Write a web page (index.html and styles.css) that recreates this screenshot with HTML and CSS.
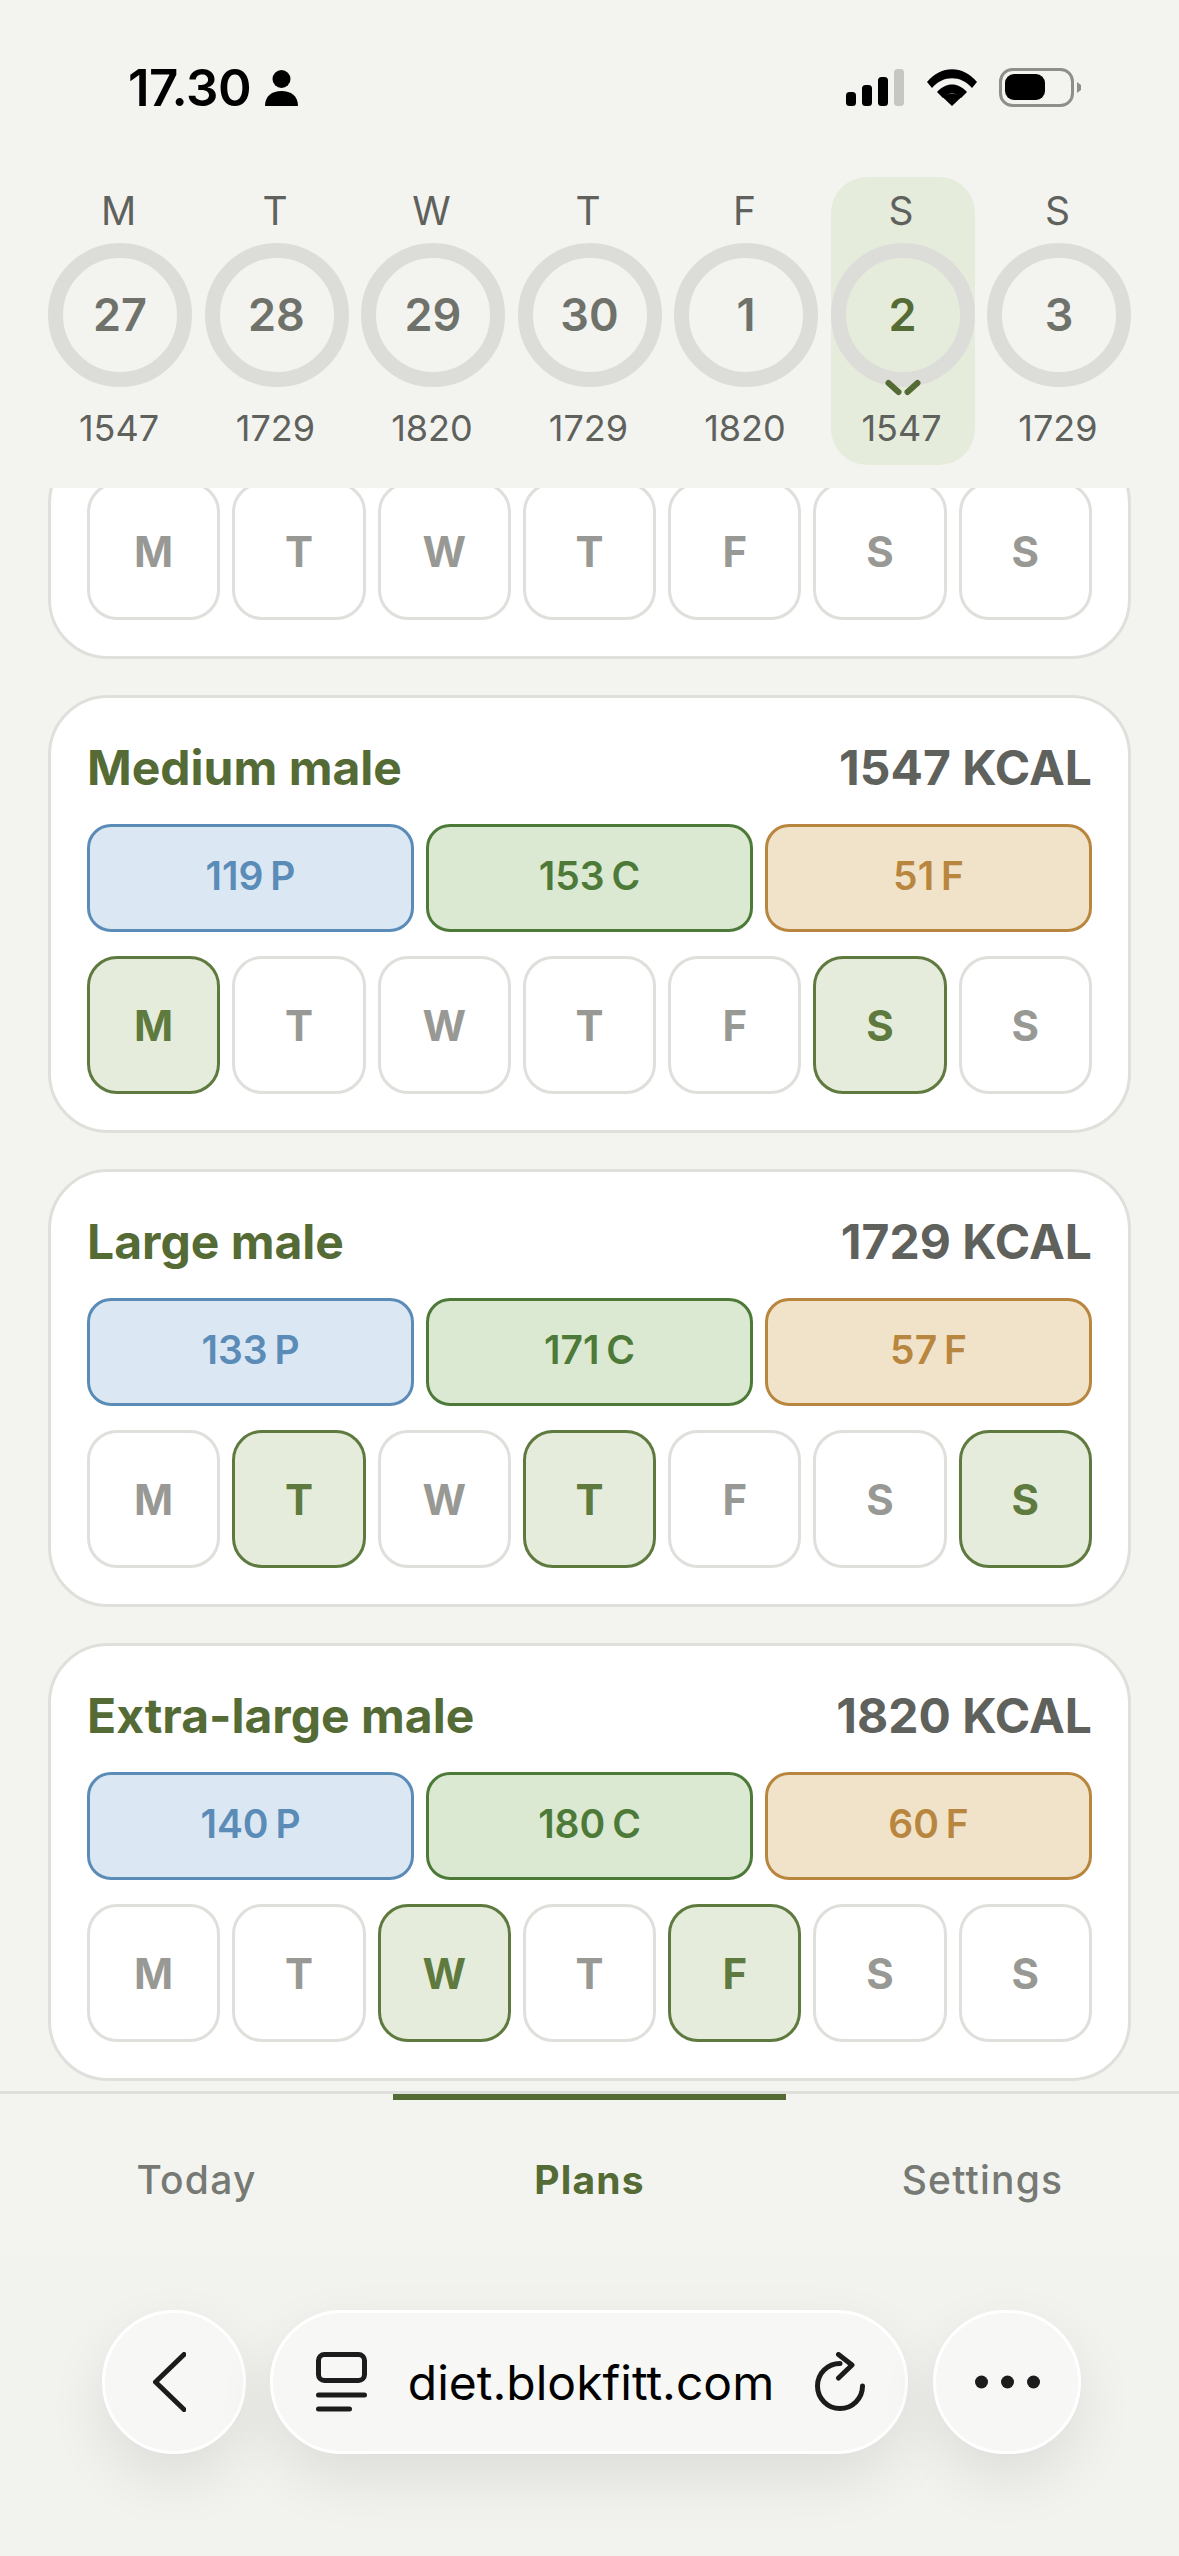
FILE: index.html
```html
<!DOCTYPE html>
<html lang="en">
<head>
    <meta charset="UTF-8">
    <meta name="viewport" content="width=device-width, initial-scale=1.0">
    <title>Plans</title>
    <link rel="stylesheet" href="styles.css">
</head>
<body>
    <div class="status-bar">
        <div class="status-left">
            <span class="status-time">17.30</span>
            <svg class="status-person" width="33" height="36" viewBox="0 0 33 36">
                <circle cx="16.5" cy="9" r="9"/>
                <path d="M0 36C0 26 7 21 16.5 21S33 26 33 36Z"/>
            </svg>
        </div>
        <svg class="status-icons" width="237" height="39" viewBox="846 68 237 39">
            <rect x="846" y="92" width="10" height="14" rx="3.5"/>
            <rect x="862" y="85" width="10" height="21" rx="3.5"/>
            <rect x="878" y="77" width="10" height="29" rx="3.5"/>
            <rect x="894" y="69" width="10" height="37" rx="3.5" fill="#c6c7c3"/>
            <path d="M927 82C941 65 963 65 977 82L972 88C961 75 943 75 932 88Z"/>
            <path d="M937 92C946 82 958 82 967 92L961 98C955 92 949 92 943 98Z"/>
            <path d="M952 106L942.5 97C948 92.5 956 92.5 961.5 97Z"/>
            <rect x="1000.5" y="69.5" width="72" height="36" rx="12" fill="none" stroke="#8e8e8b" stroke-width="3"/>
            <rect x="1005" y="74" width="40" height="26" rx="9"/>
            <path d="M1077 82L1081 85V90L1077 93Z" fill="#8e8e8b"/>
        </svg>
    </div>

    <div class="week">
        <div class="week-day">
            <span class="week-letter">M</span>
            <span class="week-ring"><span class="week-num">27</span></span>
            <span class="week-kcal">1547</span>
        </div>
        <div class="week-day">
            <span class="week-letter">T</span>
            <span class="week-ring"><span class="week-num">28</span></span>
            <span class="week-kcal">1729</span>
        </div>
        <div class="week-day">
            <span class="week-letter">W</span>
            <span class="week-ring"><span class="week-num">29</span></span>
            <span class="week-kcal">1820</span>
        </div>
        <div class="week-day">
            <span class="week-letter">T</span>
            <span class="week-ring"><span class="week-num">30</span></span>
            <span class="week-kcal">1729</span>
        </div>
        <div class="week-day">
            <span class="week-letter">F</span>
            <span class="week-ring"><span class="week-num">1</span></span>
            <span class="week-kcal">1820</span>
        </div>
        <div class="week-day selected">
            <span class="week-letter">S</span>
            <span class="week-ring"><span class="week-num">2</span></span>
            <svg class="week-chevron" width="36" height="18" viewBox="0 0 36 18">
                <path d="M3.5 4L13.5 13M32.5 4L22.5 13"/>
            </svg>
            <span class="week-kcal">1547</span>
        </div>
        <div class="week-day">
            <span class="week-letter">S</span>
            <span class="week-ring"><span class="week-num">3</span></span>
            <span class="week-kcal">1729</span>
        </div>
    </div>

    <div class="plans">
        <div class="plan">
            <div class="days">
                <div class="day">M</div>
                <div class="day">T</div>
                <div class="day">W</div>
                <div class="day">T</div>
                <div class="day">F</div>
                <div class="day">S</div>
                <div class="day">S</div>
            </div>
        </div>

        <div class="plan">
            <div class="plan-head">
                <span class="plan-name">Medium male</span>
                <span class="plan-kcal">1547 KCAL</span>
            </div>
            <div class="macros">
                <div class="macro protein">119 P</div>
                <div class="macro carbs">153 C</div>
                <div class="macro fat">51 F</div>
            </div>
            <div class="days">
                <div class="day on">M</div>
                <div class="day">T</div>
                <div class="day">W</div>
                <div class="day">T</div>
                <div class="day">F</div>
                <div class="day on">S</div>
                <div class="day">S</div>
            </div>
        </div>

        <div class="plan">
            <div class="plan-head">
                <span class="plan-name">Large male</span>
                <span class="plan-kcal">1729 KCAL</span>
            </div>
            <div class="macros">
                <div class="macro protein">133 P</div>
                <div class="macro carbs">171 C</div>
                <div class="macro fat">57 F</div>
            </div>
            <div class="days">
                <div class="day">M</div>
                <div class="day on">T</div>
                <div class="day">W</div>
                <div class="day on">T</div>
                <div class="day">F</div>
                <div class="day">S</div>
                <div class="day on">S</div>
            </div>
        </div>

        <div class="plan">
            <div class="plan-head">
                <span class="plan-name">Extra-large male</span>
                <span class="plan-kcal">1820 KCAL</span>
            </div>
            <div class="macros">
                <div class="macro protein">140 P</div>
                <div class="macro carbs">180 C</div>
                <div class="macro fat">60 F</div>
            </div>
            <div class="days">
                <div class="day">M</div>
                <div class="day">T</div>
                <div class="day on">W</div>
                <div class="day">T</div>
                <div class="day on">F</div>
                <div class="day">S</div>
                <div class="day">S</div>
            </div>
        </div>
    </div>

    <div class="tabs">
        <div class="tab">Today</div>
        <div class="tab active">Plans</div>
        <div class="tab">Settings</div>
    </div>

    <div class="browser-bar">
        <div class="pill pill-round">
            <svg width="33" height="60" viewBox="0 0 33 60">
                <path d="M31 2.5L2.5 30L31 57.5"/>
            </svg>
        </div>
        <div class="pill pill-url">
            <svg width="51" height="60" viewBox="0 0 51 60">
                <rect x="2.5" y="2.5" width="46" height="26" rx="6"/>
                <path d="M2.5 43H48.500M2.5 57H33.5"/>
            </svg>
            <span class="url-text">diet.blokfitt.com</span>
            <svg width="50" height="60" viewBox="0 0 50 60">
                <path d="M47.5 34A22.5 22.5 0 1 1 25 11.5"/>
                <path d="M23.5 2.5L37 13L23.5 26"/>
            </svg>
        </div>
        <div class="pill pill-more">
            <svg width="65" height="14" viewBox="0 0 65 14">
                <circle cx="6.5" cy="7" r="6.5"/>
                <circle cx="32.5" cy="7" r="6.5"/>
                <circle cx="58.5" cy="7" r="6.5"/>
            </svg>
        </div>
    </div>
</body>
</html>
```

FILE: styles.css
```css
* {
    box-sizing: border-box;
}

body {
    margin: 0;
    height: 2556px;
    display: flex;
    flex-direction: column;
    overflow: hidden;
    background: #f3f4ef;
    font-family: Inter, "Liberation Sans", sans-serif;
}

/* status bar */
.status-bar {
    height: 177px;
    flex-shrink: 0;
    padding: 68px 96px 0 128px;
    display: flex;
    justify-content: space-between;
    align-items: flex-start;
}

.status-left {
    display: flex;
    align-items: center;
    gap: 14px;
    height: 39px;
}

.status-time {
    font-size: 51px;
    font-weight: 600;
    letter-spacing: -0.5px;
    line-height: 39px;
    color: #000;
}

.status-person {
    fill: #000;
}

.status-icons {
    fill: #000;
}

/* week strip */
.week {
    flex-shrink: 0;
    height: 311px;
    padding: 0 48px 23px;
    display: grid;
    grid-template-columns: repeat(7, 1fr);
    column-gap: 12.5px;
}

.week-day {
    position: relative;
    display: flex;
    flex-direction: column;
    align-items: center;
    padding-top: 10px;
    border-radius: 36px;
}

.week-day.selected {
    background: #e5ecdc;
}

.week-letter {
    height: 48px;
    padding-right: 3px;
    line-height: 48px;
    font-size: 39px;
    color: #5f615d;
}

.week-ring {
    margin-top: 8px;
    width: 144px;
    height: 144px;
    flex-shrink: 0;
    border: 15px solid #dcddd8;
    border-radius: 50%;
    display: flex;
    align-items: center;
    justify-content: center;
    padding-bottom: 2px;
}

.week-num {
    font-size: 45px;
    font-weight: 600;
    color: #6f716b;
}

.selected .week-num {
    color: #556b35;
}

.week-chevron {
    position: absolute;
    top: 202px;
    left: 54px;
    fill: none;
    stroke: #556b35;
    stroke-width: 6px;
    stroke-linecap: round;
}

.week-kcal {
    margin-top: 17px;
    height: 48px;
    padding-right: 2px;
    line-height: 48px;
    font-size: 36px;
    color: #5f615d;
}

/* plan cards, the list is scrolled to its end so the first card is cut at the top */
.plans {
    flex: 1;
    min-height: 0;
    overflow: hidden;
    display: flex;
    flex-direction: column;
    justify-content: flex-end;
    gap: 36px;
    padding: 0 48px 10px;
}

.plan {
    flex-shrink: 0;
    background: #fff;
    border: 3px solid #dfe0db;
    border-radius: 60px;
    padding: 36px;
}

.plan-head {
    height: 66px;
    margin-bottom: 24px;
    display: flex;
    justify-content: space-between;
    align-items: center;
    font-size: 48px;
    font-weight: 700;
}

.plan-name {
    color: #556b35;
}

.plan-kcal {
    color: #5f615d;
}

.macros {
    display: grid;
    grid-template-columns: repeat(3, 1fr);
    gap: 12px;
    margin-bottom: 24px;
}

.macro {
    height: 108px;
    border: 3px solid;
    border-radius: 24px;
    padding-bottom: 5px;
    display: flex;
    align-items: center;
    justify-content: center;
    font-size: 39px;
    font-weight: 600;
    word-spacing: -3px;
}

.protein {
    background: #dbe8f3;
    border-color: #5b8cb8;
    color: #5b8cb8;
}

.carbs {
    background: #dce9d2;
    border-color: #4d7a38;
    color: #4d7a38;
}

.fat {
    background: #f1e3c9;
    border-color: #b9863f;
    color: #b9863f;
}

.days {
    display: grid;
    grid-template-columns: repeat(7, 1fr);
    gap: 12px;
}

.day {
    height: 138px;
    background: #fff;
    border: 3px solid #dfe0db;
    border-radius: 30px;
    display: flex;
    align-items: center;
    justify-content: center;
    font-size: 42px;
    font-weight: 700;
    color: #989994;
}

.day.on {
    background: #e5ecdc;
    border-color: #5f7a3f;
    color: #5f7a3f;
}

/* bottom tabs */
.tabs {
    flex-shrink: 0;
    height: 159px;
    border-top: 3px solid #dfe0db;
    display: grid;
    grid-template-columns: repeat(3, 1fr);
}

.tab {
    border-top: 6px solid transparent;
    padding-top: 56px;
    text-align: center;
    font-size: 39px;
    line-height: 48px;
    font-weight: 500;
    letter-spacing: 1.2px;
    color: #777974;
}

.tab.active {
    border-top-color: #556b35;
    font-weight: 700;
    color: #556b35;
}

/* browser toolbar */
.browser-bar {
    flex-shrink: 0;
    height: 306px;
    padding: 60px 98px 0 102px;
    display: flex;
    align-items: flex-start;
    gap: 24px;
    background: #f2f3ee;
}

.pill {
    height: 144px;
    background: #f7f7f5;
    border: 3px solid #fff;
    border-radius: 72px;
    box-shadow: 0 24px 60px rgba(0, 0, 0, 0.09);
    display: flex;
    align-items: center;
    justify-content: center;
}

.pill svg {
    fill: none;
    stroke: #1c1c1c;
    stroke-width: 5px;
    stroke-linecap: round;
    stroke-linejoin: round;
}

.pill-round {
    width: 144px;
    padding-right: 9px;
}

.pill-url {
    width: 638px;
    padding: 0 40px 0 43px;
    justify-content: space-between;
}

.pill-more {
    width: 148px;
    margin-left: 1px;
}

.pill-more svg {
    fill: #1c1c1c;
    stroke: none;
}

.url-text {
    font-size: 48px;
    color: #000;
}
```
